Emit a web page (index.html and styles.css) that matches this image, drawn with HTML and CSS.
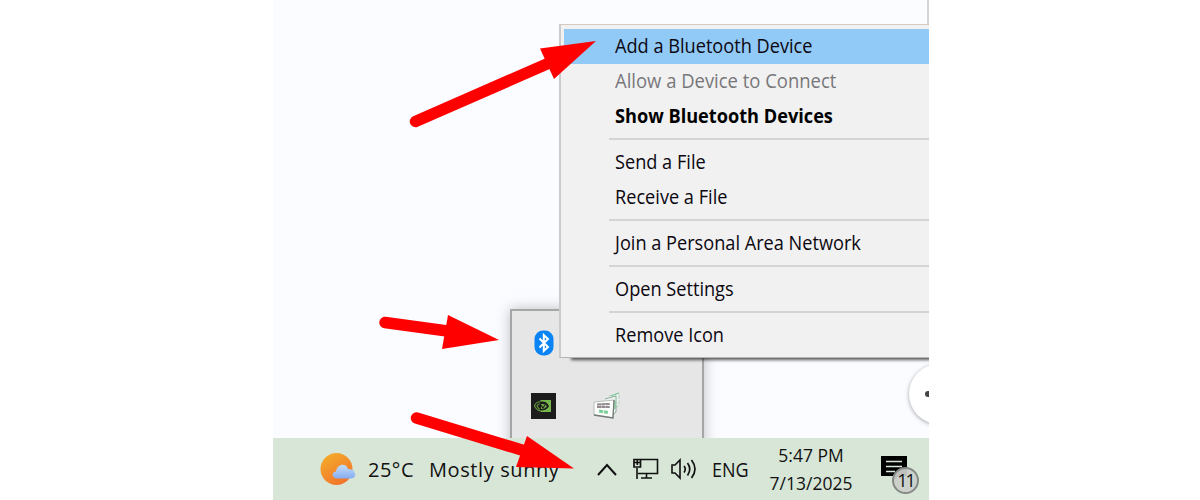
FILE: index.html
```html
<!doctype html>
<html lang="en">

<head>
    <meta charset="utf-8">
    <title>Bluetooth tray menu</title>
    <link rel="stylesheet" href="styles.css">
</head>

<body>

<div class="screen">
    <div class="desktop">
        <div class="window-edge"></div>
        <div class="round-button"><span></span></div>

        <div class="tray-popup">
            <svg class="tray-icon bluetooth" viewBox="0 0 20 26">
                <rect x="0.5" y="0.5" width="19" height="25" rx="8.5" fill="#0a84f5"/>
                <path d="M5.5 8.5L14 17L9.8 21V5L14 9L5.5 17.5" fill="none" stroke="#fff" stroke-width="2"/>
            </svg>
            <svg class="tray-icon nvidia" viewBox="0 0 25 26">
                <rect width="25" height="26" fill="#1c1c1c"/>
                <path d="M9.500 7H20V19H9.500V17C15 18 17 15 18 13C16 9 14 8 9.500 8.500Z" fill="#76b64a"/>
                <path d="M9.500 8.500C6 9 4 11 3.500 13C5 16 7 17.500 9.500 18M9.500 10.500C7.500 11 6.500 12 6 13C7 15 8 16 9.500 16.200" fill="none" stroke="#5f973c" stroke-width="1.2"/>
                <path d="M9.500 10.500C13 10 16 11.500 16.500 13C15 16 13 17 9.500 16.500Z" fill="#76b64a" stroke="#1c1c1c" stroke-width="1.2"/>
                <path d="M10 12L12 15L14 12" fill="none" stroke="#1c1c1c" stroke-width="1.2"/>
            </svg>
            <svg class="tray-icon cards" viewBox="0 0 28 28">
                <path d="M16 4L26 1V14L21 16" fill="#e8f1eb" stroke="#b6cfc0" stroke-dasharray="4 2"/>
                <path d="M12 7L23 4V20L20 23" fill="#eef5f0" stroke="#8fa99a"/>
                <path d="M18 4L26 1M22 9V17" stroke="#7ccb98" stroke-width="1.3"/>
                <path d="M1 10L21 8L20 26L1 23Z" fill="#fbfdfb" stroke="#b9bdba"/>
                <path d="M21 8L20 26L1 23" fill="none" stroke="#737975" stroke-width="1.3"/>
                <path d="M4 12.500L17 12M4 15L17 15" stroke="#938a90" stroke-width="2.200" stroke-dasharray="4 .3"/>
                <path d="M6 19L15 20.500" stroke="#7bcf98" stroke-width="3" stroke-dasharray="4 1"/>
            </svg>
        </div>

        <div class="menu">
            <div class="item active"><span>Add a Bluetooth Device</span></div>
            <div class="item disabled"><span>Allow a Device to Connect</span></div>
            <div class="item default"><span>Show Bluetooth Devices</span></div>
            <div class="separator"></div>
            <div class="item"><span>Send a File</span></div>
            <div class="item"><span>Receive a File</span></div>
            <div class="separator"></div>
            <div class="item"><span>Join a Personal Area Network</span></div>
            <div class="separator"></div>
            <div class="item"><span>Open Settings</span></div>
            <div class="separator"></div>
            <div class="item"><span>Remove Icon</span></div>
        </div>
    </div>

    <div class="taskbar">
        <svg class="weather" viewBox="0 0 36 34">
            <defs>
                <linearGradient id="sun" x1="0" y1="0" x2="0.6" y2="1">
                    <stop offset="0" stop-color="#f4b02c"/>
                    <stop offset="1" stop-color="#f1762a"/>
                </linearGradient>
                <linearGradient id="cloud" x1="0" y1="0" x2="0" y2="1">
                    <stop offset="0" stop-color="#c3defc"/>
                    <stop offset="1" stop-color="#86acf0"/>
                </linearGradient>
            </defs>
            <circle cx="16.5" cy="17" r="16" fill="url(#sun)"/>
            <path d="M17 26.500C11.500 26.500 11 20 16 19.500C17 11.500 26.500 10.500 28 17C36 16 38 26.500 31 26.500Z" fill="url(#cloud)"/>
        </svg>
        <span class="temp">25°C</span>
        <span class="forecast">Mostly sunny</span>
        <svg class="chevron" viewBox="0 0 20 13">
            <path d="M1 12L10 2L19 12" fill="none" stroke="#111" stroke-width="2"/>
        </svg>
        <svg class="network" viewBox="0 0 26 22">
            <path d="M8 1.500H24.500V15.500H5M4 10V21M13.500 15V20M8 20H19" fill="none" stroke="#111" stroke-width="1.600"/>
            <path d="M1 1.500H7.500V9H1ZM1 4.500H7.500M4.300 1V7" fill="none" stroke="#111" stroke-width="1.700"/>
        </svg>
        <svg class="volume" viewBox="0 0 26 22">
            <path d="M1 7H4L9 2V20L4 15H1Z" fill="none" stroke="#111" stroke-width="1.600"/>
            <path d="M13 8Q15.500 11 13 14.500M16.500 5Q21 11 16.500 17.500M20.500 2Q27.500 11 20.500 20" fill="none" stroke="#111" stroke-width="1.700"/>
        </svg>
        <span class="lang">ENG</span>
        <div class="clock">
            <span class="time">5:47 PM</span>
            <span class="date">7/13/2025</span>
        </div>
        <div class="notifications">
            <svg viewBox="0 0 26 26">
                <path d="M0 0H26V20H18L12 25V20H0Z" fill="#000"/>
                <path d="M5 5.500H21M5 10.500H21M5 15.500H14" stroke="#dce8dc" stroke-width="1.300"/>
            </svg>
            <span class="badge">11</span>
        </div>
    </div>

    <svg class="arrows" viewBox="0 0 656 500">
        <g stroke="#f00" stroke-width="11.500" stroke-linecap="round">
            <path d="M142.500 121.500L275 63.500"/>
            <path d="M112 322.500L178 331.500"/>
            <path d="M143.500 418L252 451"/>
        </g>
        <g fill="#f00">
            <path d="M323 41L267 48.500L281 79Z"/>
            <path d="M226 340L175 315L169 349Z"/>
            <path d="M301 468.500L254 436L243 467Z"/>
        </g>
    </svg>
</div>

</body>

</html>
```

FILE: styles.css
```css
html,
body {
    height: 100%;
    margin: 0;
    background: #fff;
}

.screen {
    position: relative;
    display: flex;
    flex-direction: column;
    width: 656px;
    height: 500px;
    margin-left: 273px;
    overflow: hidden;
    font-family: "Open Sans", "Noto Sans", sans-serif;
    color: #111;
}

.desktop {
    position: relative;
    height: 438px;
    overflow: hidden;
    background: #fafcff;
}

.window-edge {
    width: 654px;
    height: 24px;
    border-right: 2px solid #d3d4d7;
}

/* floating things over the desktop */
.round-button {
    position: absolute;
    left: 636px;
    top: 364px;
    display: flex;
    align-items: center;
    width: 60px;
    height: 60px;
    border-radius: 50%;
    background: #fff;
    box-shadow: 0 1px 4px rgba(0,0,0,0.35);
}

.round-button span {
    width: 6px;
    height: 6px;
    margin-left: 16px;
    border-radius: 50%;
    background: #444;
}

.tray-popup {
    position: absolute;
    left: 237px;
    top: 309px;
    display: grid;
    grid-template-columns: 63px 63px 63px;
    grid-template-rows: 63px 64px;
    align-items: center;
    justify-items: center;
    box-sizing: border-box;
    width: 194px;
    height: 140px;
    border: 2px solid #a5a5a6;
    background: #e6e6e6;
    box-shadow: 0 0 13px rgba(0,0,0,0.25);
}

.bluetooth {
    width: 20px;
    height: 26px;
}

.nvidia {
    grid-row: 2;
    width: 25px;
    height: 26px;
}

.cards {
    grid-row: 2;
    width: 28px;
    height: 28px;
}

.menu {
    position: absolute;
    left: 286px;
    top: 24px;
    box-sizing: border-box;
    width: 400px;
    height: 334px;
    padding: 4px 3px 0;
    border: 2px solid #cbcbcb;
    border-top: 1px solid #d3c9c3;
    border-bottom: 1px solid #b5b5b5;
    background: #f1f1f1;
    box-shadow: 11px 3px 3px -1px rgba(0,0,0,0.65);
}

.item {
    display: flex;
    align-items: center;
    height: 34.9px;
    padding-left: 51px;
    font-size: 20px;
    line-height: 26px;
    white-space: nowrap;
    color: #0b0710;
}

.item span {
    margin-top: -1px;
    transform: scaleX(0.908);
    transform-origin: 0 50%;
}

.active {
    background: #91c9f7;
}

.disabled {
    color: #77777a;
}

.disabled span {
    transform: scaleX(0.922);
}

.default {
    font-weight: bold;
    color: #000;
}

.separator {
    height: 2px;
    margin: 4.6px 0 4.6px 45px;
    background: #d4d4d4;
}

.taskbar {
    display: flex;
    align-items: center;
    height: 62px;
    background: #d7e6d7;
    font-size: 20px;
    white-space: nowrap;
}

.weather {
    width: 36px;
    height: 34px;
    margin-left: 47px;
}

.temp {
    width: 61px;
    margin-left: 12px;
    letter-spacing: 0.5px;
}

.forecast {
    width: 131px;
    letter-spacing: 0.6px;
}

.chevron {
    width: 20px;
    height: 13px;
    margin-left: 37px;
}

.network {
    width: 26px;
    height: 22px;
    margin-left: 16px;
}

.volume {
    width: 26px;
    height: 22px;
    margin-left: 12px;
}

.lang {
    width: 37px;
    margin-left: 15px;
    transform: scaleX(0.9);
    transform-origin: 0 50%;
}

.clock {
    display: flex;
    flex-direction: column;
    align-items: center;
    width: 84px;
    margin-left: 20px;
    font-size: 19px;
    line-height: 28px;
    transform: scaleX(0.92);
}

.notifications {
    position: relative;
    width: 26px;
    height: 26px;
    margin-left: 28px;
}

.notifications svg {
    display: block;
}

.badge {
    position: absolute;
    left: 11px;
    top: 11px;
    box-sizing: border-box;
    width: 27px;
    height: 27px;
    border: 2px solid #858985;
    border-radius: 50%;
    background: rgba(203,207,203,0.93);
    font-size: 18px;
    line-height: 23px;
    letter-spacing: -2px;
    text-align: center;
}

.arrows {
    position: absolute;
    left: 0;
    top: 0;
    width: 656px;
    height: 500px;
}
```
